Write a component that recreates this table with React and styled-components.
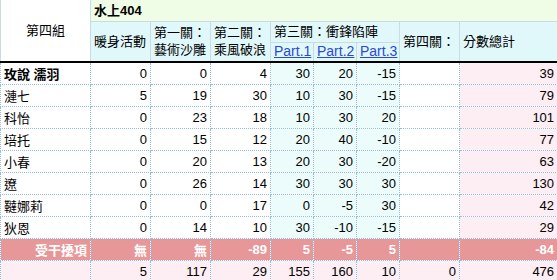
import React from 'react';
import styled, { createGlobalStyle } from 'styled-components';

const GlobalStyle = createGlobalStyle`
  html, body {
    margin: 0;
    padding: 0;
    background: #ffffff;
  }
  body {
    font-family: 'Liberation Sans', 'Noto Sans CJK TC', sans-serif;
    font-size: 13px;
    color: #000;
  }
`;

const Table = styled.table`
  width: 557px;
  table-layout: fixed;
  border-collapse: collapse;
  border-spacing: 0;
`;

const HeadCell = styled.th`
  font-weight: ${(p) => (p.bold ? 'bold' : 'normal')};
  text-align: ${(p) => p.align || 'left'};
  vertical-align: middle;
  padding: 0 3px;
  line-height: 17px;
  background: ${(p) => p.bg || '#e1f8fb'};
  border: 1px solid #c9dbe3;
  border-top: none;
  white-space: nowrap;
  overflow: hidden;
`;

const HeadRow = styled.tr`
  height: 21px;
`;

const LastHeadRow = styled.tr`
  height: 20px;
  border-bottom: 2px solid #000;
`;

const PartLink = styled.a`
  color: #2a49d6;
  font-size: 14px;
  text-decoration: underline;
  cursor: pointer;
`;

const Row = styled.tr`
  height: 22px;
  background: ${(p) => p.bg || 'transparent'};
`;

const Cell = styled.td`
  padding: 0 3px;
  text-align: ${(p) => p.align || 'right'};
  font-weight: ${(p) => (p.bold ? 'bold' : 'normal')};
  color: ${(p) => p.color || '#000'};
  background: ${(p) => p.bg || 'transparent'};
  border: 1px dotted #92bde6;
  white-space: nowrap;
  overflow: hidden;
`;

const widths = [90, 60, 60, 60, 43, 43, 43, 60, 98];

const data = [
  { name: '玫說 濡羽', bold: true, v: [0, 0, 4, 30, 20, -15, '', 39] },
  { name: '漣七', v: [5, 19, 30, 10, 30, -15, '', 79] },
  { name: '科怡', v: [0, 23, 18, 10, 30, 20, '', 101] },
  { name: '培托', v: [0, 15, 12, 20, 40, -10, '', 77] },
  { name: '小春', v: [0, 20, 13, 20, 30, -20, '', 63] },
  { name: '遼', v: [0, 26, 14, 30, 30, 30, '', 130] },
  { name: '韃娜莉', v: [0, 0, 17, 0, -5, 30, '', 42] },
  { name: '狄恩', v: [0, 14, 10, 30, -10, -15, '', 29] },
];

const penalty = ['無', '無', -89, 5, -5, 5, '', -84];
const totals = [5, 117, 29, 155, 160, 10, 0, 476];

const cellBg = (i) => {
  if (i >= 3 && i <= 5) return '#ecfcfb';
  if (i === 7) return '#fdeef4';
  return '#ffffff';
};

const App = () => {
  return (
    <>
      <GlobalStyle />
      <Table>
        <colgroup>
          {widths.map((w, i) => (
            <col key={i} style={{ width: w }} />
          ))}
        </colgroup>
        <thead>
          <HeadRow>
            <HeadCell rowSpan={3} align="center" bg="#ffffff">
              第四組
            </HeadCell>
            <HeadCell colSpan={8} bold bg="#effde6">
              水上404
            </HeadCell>
          </HeadRow>
          <HeadRow>
            <HeadCell rowSpan={2}>暖身活動</HeadCell>
            <HeadCell rowSpan={2}>
              第一關：
              <br />
              藝術沙雕
            </HeadCell>
            <HeadCell rowSpan={2}>
              第二關：
              <br />
              乘風破浪
            </HeadCell>
            <HeadCell colSpan={3}>第三關：衝鋒陷陣</HeadCell>
            <HeadCell rowSpan={2}>第四關：</HeadCell>
            <HeadCell rowSpan={2}>分數總計</HeadCell>
          </HeadRow>
          <LastHeadRow>
            <HeadCell>
              <PartLink>Part.1</PartLink>
            </HeadCell>
            <HeadCell>
              <PartLink>Part.2</PartLink>
            </HeadCell>
            <HeadCell>
              <PartLink>Part.3</PartLink>
            </HeadCell>
          </LastHeadRow>
        </thead>
        <tbody>
          {data.map((r) => (
            <Row key={r.name}>
              <Cell align="left" bold={r.bold}>
                {r.name}
              </Cell>
              {r.v.map((v, i) => (
                <Cell key={i} bg={cellBg(i)}>
                  {v}
                </Cell>
              ))}
            </Row>
          ))}
          <Row bg="#e79797">
            <Cell bold color="#ffffff">
              受干擾項
            </Cell>
            {penalty.map((v, i) => (
              <Cell key={i} bold color="#ffffff">
                {v}
              </Cell>
            ))}
          </Row>
          <Row bg="#fdeef4">
            <Cell />
            {totals.map((v, i) => (
              <Cell key={i}>{v}</Cell>
            ))}
          </Row>
        </tbody>
      </Table>
    </>
  );
};

export default App;
